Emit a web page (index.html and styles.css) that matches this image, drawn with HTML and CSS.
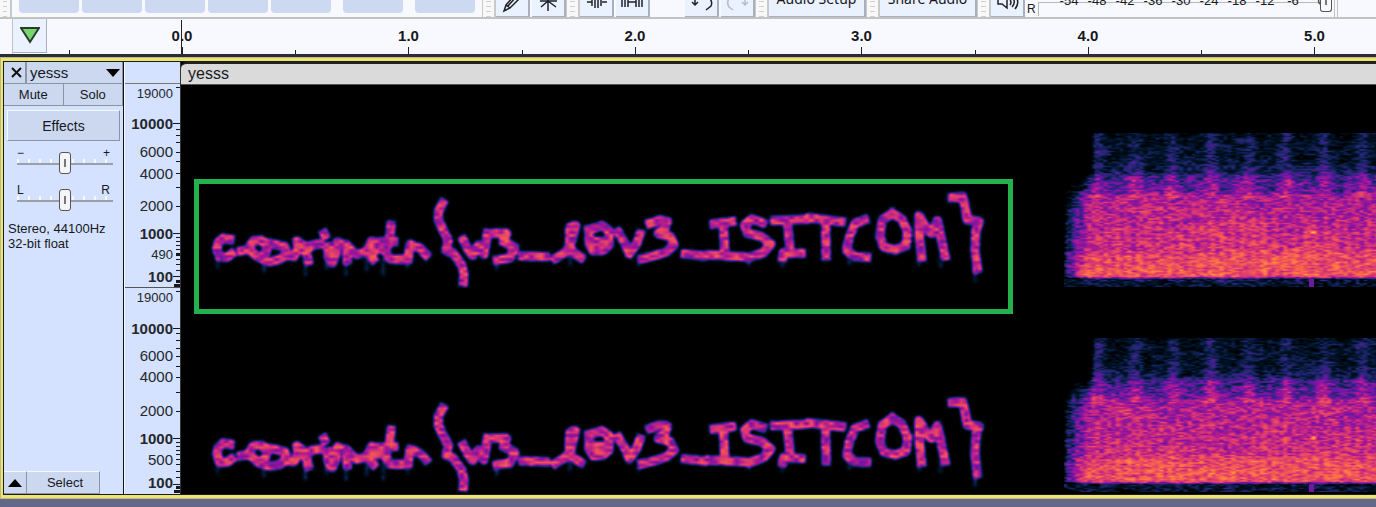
FILE: index.html
```html
<!DOCTYPE html>
<html lang="en">
<head>
<meta charset="utf-8">
<meta name="viewport" content="width=device-width, initial-scale=1">
<title>yesss</title>
<link rel="stylesheet" href="styles.css">
</head>
<body>
<header class="toolbar">
  <div class="grip grip-first"></div>
  <div class="transport">
    <button class="key" aria-label="Pause"></button>
    <button class="key" aria-label="Play"></button>
    <button class="key" aria-label="Stop"></button>
    <button class="key" aria-label="Skip to start"></button>
    <button class="key" aria-label="Skip to end"></button>
    <button class="key key-apart" aria-label="Record"></button>
    <button class="key key-apart" aria-label="Loop"></button>
  </div>
  <div class="grip"></div>
  <div class="tools">
    <button class="tool" aria-label="Draw"><svg width="32" height="17" viewBox="0 0 32 17"><path d="M8 11 10 5 18-4 22 0 14 8ZM10 5 14 8M12 6 20-3" /></svg></button>
    <button class="tool" aria-label="Multi-tool"><svg width="32" height="17" viewBox="0 0 32 17"><path d="M16-5V11M8 1H25M16 1 9 7M16 1 24 7" /></svg></button>
  </div>
  <div class="grip"></div>
  <div class="tools tools-edit">
    <button class="tool" aria-label="Trim"><svg width="32" height="17" viewBox="0 0 32 17"><path d="M7 2H12M22 2H27M12-3V6M15-3V8M18-3V8M21-3V6" /></svg></button>
    <button class="tool" aria-label="Silence"><svg width="32" height="17" viewBox="0 0 32 17"><path d="M6-1V7M9-3V7M12-3V7M12 2H20M20-3V7M23-3V7M26-1V7" /></svg></button>
  </div>
  <div class="tools">
    <button class="tool" aria-label="Undo"><svg width="32" height="17" viewBox="0 0 32 17"><path d="M10-3V5M7 2 10 5 13 2M24-3Q28 2 26 6L21 10" /></svg></button>
    <button class="tool tool-off" aria-label="Redo" disabled><svg width="32" height="17" viewBox="0 0 32 17"><path d="M24-3V5M21 2 24 5 27 2M9-3Q5 2 8 7L12 10" /></svg></button>
  </div>
  <div class="grip"></div>
  <button class="tool tool-text">Audio Setup</button>
  <div class="grip"></div>
  <button class="tool tool-text">Share Audio</button>
  <div class="grip"></div>
  <button class="tool" aria-label="Playback meter"><svg width="32" height="17" viewBox="0 0 32 17"><path d="M7-2V4H11L16 8V-3M19 0Q21 2 19 5M22-2Q25 3 21 7M25-3Q29 3 24 9" /></svg></button>
  <div class="meter">
    <span class="meter-side">R</span>
    <div class="meter-scale">
      <span>-54</span><span>-48</span><span>-42</span><span>-36</span><span>-30</span><span>-24</span><span>-18</span><span>-12</span><span>-6</span><span>0</span>
    </div>
    <button class="meter-thumb" aria-label="Playback level"></button>
  </div>
</header>

<div class="timeline">
  <div class="timeline-grip"></div>
  <button class="pin" aria-label="Pinned play head"><svg width="20" height="17" viewBox="0 0 20 17"><path d="M1 1H19L10 15Z" /></svg></button>
  <div class="ruler">
    <div class="second second-now">0.0</div>
    <div class="second">1.0</div>
    <div class="second">2.0</div>
    <div class="second">3.0</div>
    <div class="second">4.0</div>
    <div class="second">5.0</div>
  </div>
</div>

<main class="track">
  <div class="track-focus">
    <div class="track-body">
      <section class="panel">
        <div class="panel-title">
          <button class="close" aria-label="Close track"><svg width="11" height="11" viewBox="0 0 11 11"><path d="M1 1 10 10M10 1 1 10" /></svg></button>
          <button class="name">yesss<svg width="14" height="8" viewBox="0 0 14 8"><path d="M0 0H14L7 8Z" /></svg></button>
        </div>
        <div class="panel-row">
          <button>Mute</button>
          <button>Solo</button>
        </div>
        <button class="effects">Effects</button>
        <label class="slider"><span>−</span><span>+</span><input type="range" min="-36" max="36" value="0" aria-label="Gain"></label>
        <label class="slider"><span>L</span><span>R</span><input type="range" min="-100" max="100" value="0" aria-label="Pan"></label>
        <p class="info">Stereo, 44100Hz<br>32-bit float</p>
        <div class="panel-foot">
          <button class="fold" aria-label="Collapse"><svg width="14" height="8" viewBox="0 0 14 8"><path d="M0 8H14L7 0Z" /></svg></button>
          <button class="select">Select</button>
        </div>
      </section>

      <section class="scales">
        <div class="scale-head"></div>
        <svg class="scale" width="55" height="203" viewBox="0 0 55 203">
          <path d="M51 3H55M48 39H55M51 45H55M51 51H55M51 58H55M51 68H55M51 77H55M51 89H55M51 103H55M51 122H55M48 149H55M51 153H55M51 157H55M51 161H55M51 165H55M51 175H55M51 180H55M51 186H55M48 192H55" />
          <path class="thick" d="M51 170H55M51 197H55M49 201H55" />
          <g class="minor"><text x="48" y="14">19000</text><text x="48" y="175">490</text></g>
          <g><text x="48" y="73">6000</text><text x="48" y="95">4000</text><text x="48" y="127">2000</text></g>
          <g class="major"><text x="48" y="45">10000</text><text x="48" y="155">1000</text><text x="48" y="198">100</text></g>
        </svg>
        <svg class="scale" width="55" height="205" viewBox="0 0 55 205">
          <path d="M51 3H55M48 40H55M51 45H55M51 52H55M51 60H55M51 68H55M51 78H55M51 89H55M51 104H55M51 123H55M48 150H55M51 154H55M51 158H55M51 162H55M51 166H55M51 171H55M51 176H55M51 183H55M51 189H55M48 196H55" />
          <path class="thick" d="M51 199H55M49 203H55" />
          <g class="minor"><text x="48" y="14">19000</text></g>
          <g><text x="48" y="73">6000</text><text x="48" y="94">4000</text><text x="48" y="128">2000</text><text x="48" y="177">500</text></g>
          <g class="major"><text x="48" y="46">10000</text><text x="48" y="156">1000</text><text x="48" y="200">100</text></g>
        </svg>
      </section>

      <section class="clip">
        <div class="clip-name">yesss</div>
        <canvas class="channel" height="203" data-seed="11" data-shift="0"></canvas>
        <canvas class="channel" height="206" data-seed="47" data-shift="2"></canvas>
        <div class="region"></div>
      </section>
    </div>
  </div>
</main>
<script src="spectrogram.js"></script>
</body>
</html>
```
FILE: styles.css
```css
* {
  box-sizing: border-box;
}

body {
  margin: 0;
  background: #646887;
  color: #16181d;
  font: 13px "Liberation Sans", Arial, sans-serif;
  overflow-x: hidden;
}

button {
  margin: 0;
  padding: 0;
  border: 0;
  color: inherit;
  font: inherit;
}

svg {
  display: block;
}

/* Toolbar */

.toolbar {
  display: flex;
  height: 19px;
  overflow: hidden;
  background: #f8f9ff;
  border-bottom: 2px solid #c2c2c2;
}

.toolbar > * {
  flex: none;
}

.grip {
  width: 14px;
  height: 17px;
  border: solid #c9c9c9;
  border-width: 0 2px 0 1px;
  background: repeating-linear-gradient(#f8f8f8 0 1px, #cfcfcf 1px 2px, #f8f8f8 2px 5px) content-box, #f8f8f8;
  padding: 0 3px;
}

.grip-first {
  width: 12px;
  padding: 0 3px;
  border-left: 0;
}

.transport {
  display: flex;
  gap: 3px;
  padding: 0 7px;
}

.key {
  width: 60px;
  height: 13px;
  background: #ccd9f0;
  border-radius: 0 0 4px 4px;
}

.key-apart {
  margin-left: 9px;
}

.tools {
  display: flex;
  gap: 2px;
}

.tools-edit {
  padding-right: 35px;
}

.tool {
  width: 34px;
  height: 17px;
  background: #eaf1ff;
  border: solid #a9afbd;
  border-width: 0 2px 1px 0;
}

.tool svg {
  fill: none;
  stroke: #202228;
  stroke-width: 1.5;
}

.tool-off svg {
  stroke: #b7bbc5;
}

.tool-text {
  width: 97px;
  height: 34px;
  margin-top: -17px;
  padding-bottom: 2px;
  font: 14px "Noto Sans", sans-serif;
  white-space: nowrap;
}

.meter {
  display: flex;
  width: 313px;
  height: 17px;
  padding-left: 2px;
  border-right: 4px double #c2c2c2;
}

.meter-side {
  width: 11px;
  font-size: 12px;
  line-height: 18px;
}

.meter-scale {
  display: grid;
  grid-template-columns: repeat(10, 28px);
  height: 14px;
  margin-top: 2px;
  padding-left: 16px;
  width: 282px;
  border: solid #b9b9b9;
  border-width: 1px 0 0 1px;
  text-align: center;
  line-height: 1px;
}

.meter-scale span {
  margin-top: -3px;
}

.meter-thumb {
  width: 12px;
  height: 12px;
  background: linear-gradient(#777, #777) center top / 2px 5px no-repeat #f8f9fb;
  border: 1px solid #555;
  border-top: 0;
  border-radius: 0 0 3px 3px;
}

/* Time ruler */

.timeline {
  display: flex;
  height: 38px;
  background: #f8f9ff;
  border-bottom: 3px solid #2b2e36;
}

.timeline-grip {
  flex: none;
  width: 13px;
  border-right: 1px solid #c2c2c2;
}

.pin {
  flex: none;
  width: 34px;
  height: 34px;
  padding: 0 7px;
  background: #eaf1ff;
  border: solid #a9afbd;
  border-width: 0 1px 1px 0;
}

.pin svg {
  fill: #78d66f;
  stroke: #2b3a2b;
  stroke-width: 2;
}

.ruler {
  flex: 1;
  display: grid;
  grid-template-columns: repeat(3, 226px 227px);
  margin-left: 22px;
  overflow: hidden;
}

.second {
  position: relative;
  font-size: 15px;
  font-weight: bold;
  line-height: 34px;
  text-align: center;
  background:
    linear-gradient(#222, #222) left bottom / 1px 4px no-repeat,
    linear-gradient(#222, #222) center bottom / 1px 7px no-repeat;
}

.second-now::after {
  content: "";
  position: absolute;
  top: 1px;
  bottom: 0;
  left: 50%;
  margin-left: -1px;
  width: 1px;
  background: #222;
}

/* Track frame */

.track {
  border: solid #bdb98c;
  border-width: 1px 0 1px 1px;
}

.track-focus {
  border: solid #ebe572;
  border-width: 3px 0 3px 2px;
}

.track-body {
  display: grid;
  grid-template-columns: 120px 57px 1fr;
  border: solid #1d1d1d;
  border-width: 1px 0 1px 1px;
}

/* Control panel */

.panel {
  display: flex;
  flex-direction: column;
  background: #d4e2ff;
  border-right: 1px solid #111;
}

.panel button {
  background: #cbd8f0;
  border: solid #8d95a5;
  border-width: 0 1px 1px 0;
}

.panel-title {
  display: flex;
  height: 22px;
}

.panel .close {
  width: 23px;
  padding-left: 7px;
  border-right-width: 2px;
}

.close path {
  stroke: #111;
  stroke-width: 2;
}

.panel .name {
  flex: 1;
  display: flex;
  align-items: center;
  justify-content: space-between;
  padding: 0 2px 0 3px;
  font-size: 15px;
}

.panel-row {
  display: grid;
  grid-template-columns: 1fr 1fr;
  height: 22px;
}

.panel .effects {
  height: 31px;
  margin: 4px 3px 5px;
  border: solid;
  border-width: 1px;
  border-color: #f4f8ff #8d95a5 #8d95a5 #f4f8ff;
  font-size: 14px;
}

.slider {
  display: grid;
  grid-template: 28px / 1fr 1fr;
  margin: 0 10px 9px 13px;
}

.slider span {
  grid-area: 1 / 1;
  font-size: 12px;
  line-height: 14px;
}

.slider span + span {
  grid-area: 1 / 2;
  justify-self: end;
  padding-right: 3px;
}

.slider input {
  grid-area: 1 / 1 / 2 / 3;
  align-self: end;
  appearance: none;
  width: 100%;
  height: 22px;
  margin: 0;
  background:
    linear-gradient(#9b9fa8, #9b9fa8) 0 11px / 100% 2px no-repeat,
    repeating-linear-gradient(90deg, #f8f8f8 0 2px, transparent 2px 11px) 0 7px / 100% 4px no-repeat;
}

.slider input::-webkit-slider-thumb {
  appearance: none;
  width: 12px;
  height: 22px;
  background: linear-gradient(#777, #777) center / 2px 8px no-repeat #f4f5f7;
  border: 1px solid #555;
  border-radius: 3px;
}

.info {
  margin: 1px 4px;
  font-size: 13px;
  line-height: 15px;
  white-space: nowrap;
}

.panel-foot {
  display: flex;
  height: 23px;
  margin-top: auto;
}

.panel .fold {
  width: 23px;
  padding: 0 4px;
  border-top: 1px solid #f4f8ff;
}

.panel .select {
  width: 73px;
  padding-left: 4px;
  border-top: 1px solid #f4f8ff;
}

/* Frequency scales */

.scales {
  background: #d4e2ff;
  border: solid #f4f8ff;
  border-width: 0 0 0 1px;
  border-right: 1px solid #333;
}

.scale-head {
  height: 22px;
  border-bottom: 1px solid #777;
}

.scale + .scale {
  box-sizing: content-box;
  border-top: 1px solid #555;
}

.scale text {
  font-size: 15px;
  text-anchor: end;
  fill: #25272c;
}

.scale .minor text {
  font-size: 13px;
}

.scale .major text {
  font-weight: bold;
}

.scale path {
  stroke: #16181d;
  shape-rendering: crispEdges;
}

.scale .thick {
  stroke-width: 3;
}

/* Clip */

.clip {
  position: relative;
  min-width: 0;
  background: #000;
}

.clip-name {
  height: 23px;
  padding-left: 7px;
  background: #dadada;
  border-top: 2px solid #222;
  border-bottom: 1px solid #555;
  border-top-left-radius: 6px;
  font-size: 16px;
  line-height: 19px;
}

.channel {
  display: block;
  width: 100%;
}

.region {
  position: absolute;
  left: 13px;
  top: 117px;
  width: 819px;
  height: 135px;
  border: 5px solid #22b14c;
}
```
FILE: spectrogram.js
```js
// Strokes of the drawn signal, three units to the pixel; x is the group's left edge.
const GROUPS = [
  { x: 9, strokes: [
    [120,208, 100,204, 85,217, 80,238, 90,262, 110,262, 124,252],
    [155,242, 175,238, 190,212, 215,210, 232,225, 228,248, 212,260],
    [225,218, 260,224, 285,230, 290,254, 268,268, 238,275, 205,262, 178,240],
    [290,256, 312,260, 325,235, 320,212, 345,230, 355,272],
    [348,245, 365,225, 390,222],
    [402,191, 404,195],
    [412,230, 415,260, 427,278, 438,250, 442,216, 470,226, 472,270],
    [470,226, 490,245],
    [505,252, 530,245, 545,214, 570,218],
    [530,245, 550,268],
    [550,245, 575,232],
    [603,166, 598,210, 586,245, 600,267, 630,268],
    [575,216, 612,215],
    [655,266, 660,222, 690,235, 708,254],
    [758,100, 745,125, 745,150, 762,186, 775,210, 768,240, 790,250, 815,285, 822,315, 820,336]
  ] },
  { x: 279, strokes: [
    [10,210, 25,240, 38,256, 55,225, 72,254, 82,190],
    [107,190, 140,190, 130,215, 165,232, 150,264, 112,270],
    [188,258, 256,260],
    [286,265, 320,245, 335,215, 347,167, 330,172, 328,215, 335,245, 362,262],
    [387,180, 425,167, 447,182, 447,225, 430,241, 400,243, 387,220, 387,180],
    [400,212, 420,214],
    [475,187, 495,220, 508,252, 530,220, 540,192],
    [570,160, 600,150, 622,154, 615,175, 595,190, 630,200, 643,225, 620,245, 580,258, 547,266],
    [676,252, 730,258],
    [762,162, 815,155], [790,160, 795,250], [750,255, 846,260]
  ] },
  { x: 549, strokes: [
    [98,158, 65,147, 44,165, 52,190, 95,200, 123,222, 100,248, 60,262],
    [134,152, 225,148], [172,155, 180,235], [158,262, 160,248, 213,250],
    [240,144, 335,155], [287,155, 288,258],
    [404,150, 375,160, 358,200, 350,241, 375,260, 410,262],
    [487,130, 457,150, 449,200, 462,231, 495,240, 528,228, 533,185, 515,147, 487,130],
    [575,262, 568,200, 567,137, 590,175, 605,190, 622,152, 635,210, 645,258],
    [667,83, 698,80, 705,110, 712,150, 748,154, 738,180, 735,240, 742,296]
  ] }
];

// Faint echoes hanging below the strokes: x, top, bottom in the first group's units.
const DRIPS = [[83,262,290], [222,280,302], [346,270,312], [410,265,295], [468,270,312],
  [530,270,300], [580,270,312], [652,265,290], [920,270,298], [1140,255,285],
  [1345,265,285], [1677,258,282], [1777,258,288], [1978,260,280], [2187,255,285],
  [2252,262,288], [2355,300,332]];

const COLOURS = [
  [0, 0, 0, 0], [0.14, 0, 20, 42], [0.27, 32, 38, 112], [0.4, 104, 22, 165],
  [0.53, 168, 24, 148], [0.67, 218, 56, 112], [0.8, 244, 92, 82],
  [0.92, 255, 130, 66], [1, 255, 185, 75]
];

const NOISE_START = 885;

function colourOf(v) {
  v = Math.max(0, Math.min(1, v));
  for (let i = 1; i < COLOURS.length; i++) {
    const a = COLOURS[i - 1], b = COLOURS[i];
    if (v <= b[0]) {
      const t = (v - a[0]) / (b[0] - a[0]);
      return [1, 2, 3].map(k => a[k] + (b[k] - a[k]) * t);
    }
  }
  return [255, 185, 75];
}

function hash(x, y, seed) {
  let n = Math.imul(x, 374761393) + Math.imul(y, 668265263) + Math.imul(seed, 1274126177);
  n = Math.imul(n ^ (n >>> 13), 1274126177);
  return ((n ^ (n >>> 16)) >>> 0) / 4294967296;
}

function noise(x, y, seed) {
  const ix = Math.floor(x), iy = Math.floor(y), fx = x - ix, fy = y - iy;
  const top = hash(ix, iy, seed) * (1 - fx) + hash(ix + 1, iy, seed) * fx;
  const low = hash(ix, iy + 1, seed) * (1 - fx) + hash(ix + 1, iy + 1, seed) * fx;
  return top * (1 - fy) + low * fy - 0.5;
}

function ramp(points, v) {
  if (v <= points[0][0]) return points[0][1];
  for (let i = 1; i < points.length; i++) {
    const a = points[i - 1], b = points[i];
    if (v <= b[0]) return a[1] + (b[1] - a[1]) * (v - a[0]) / (b[0] - a[0]);
  }
  return points[points.length - 1][1];
}

const LEVELS = [[48, 0.12], [75, 0.16], [86, 0.22], [91, 0.35], [106, 0.42], [110, 0.54],
  [140, 0.59], [162, 0.64], [170, 0.72], [189, 0.77], [191, 0.7], [194, 0.15], [202, 0.12]];

function noiseLevel(x, y, seed) {
  const t = x - NOISE_START;
  if (t < -2 || y < 48 || y > 201) return 0;
  let v = ramp(LEVELS, y);
  const beat = Math.pow(0.5 + 0.5 * Math.cos((t - 31) * 2 * Math.PI / 37.8), 3);
  if (y < 113) v += beat * (y < 91 ? 0.13 : 0.16) - 0.03;
  if (y > 130 && y < 191) v += 0.03 * Math.cos(t * 2 * Math.PI / 10.4);
  const depth = y < 91 ? 0.24 : 0.32;
  v += noise(x / 4, y / 1.5, seed) * depth + noise(x / 9, y / 3, seed + 5) * 0.12;
  v += noise(x / 20, y / 12, seed + 9) * 0.08;
  const edge = y < 91 ? 21 : y < 106 ? 6 - (y - 91) / 2 : -2;
  v -= y < 91
    ? ramp([[edge - 7, 0.7], [edge + 8, 0]], t)
    : y > 193 ? 0 : ramp([[edge - 3, 0.8], [edge + 3, 0.42], [edge + 12, 0.24], [edge + 28, 0]], t);
  if (y > 193 && Math.abs(t - 245) < 3) v = 0.42;
  const spot = Math.hypot((t - 247) / 5, (y - 147) / 3);
  return spot < 1 ? v + (1 - spot) * 0.5 : v;
}

function drawChannel(canvas) {
  const width = canvas.width = canvas.clientWidth;
  const height = canvas.height;
  const seed = Number(canvas.dataset.seed);
  const shift = Number(canvas.dataset.shift);

  const mask = document.createElement("canvas");
  mask.width = width;
  mask.height = height;
  const pen = mask.getContext("2d");
  pen.filter = "blur(1.8px)";
  pen.strokeStyle = "#fff";
  pen.lineWidth = 9;
  pen.lineCap = "square";
  pen.lineJoin = "round";
  pen.beginPath();
  for (const group of GROUPS) {
    for (const s of group.strokes) {
      for (let i = 0; i < s.length; i += 2) {
        const x = group.x + s[i] / 3, y = 85 + shift + s[i + 1] / 3;
        i ? pen.lineTo(x, y) : pen.moveTo(x, y);
      }
    }
  }
  pen.stroke();

  pen.strokeStyle = "rgba(255, 255, 255, 0.3)";
  pen.lineWidth = 4;
  pen.lineCap = "round";
  pen.beginPath();
  for (const [x, top, bottom] of DRIPS) {
    pen.moveTo(9 + x / 3, 85 + shift + top / 3);
    pen.lineTo(9 + x / 3, 85 + shift + bottom / 3);
  }
  pen.stroke();

  const signal = pen.getImageData(0, 0, width, height).data;
  const view = canvas.getContext("2d");
  const image = view.createImageData(width, height);
  for (let y = 0; y < height; y++) {
    for (let x = 0; x < width; x++) {
      const at = (y * width + x) * 4;
      const m = Math.min(1.15, signal[at + 3] / 255 * 1.3);
      let v = 0;
      if (m > 0.01) v = m * (0.52 + noise(x / 5, y / 3, seed) * 0.36);
      else if (x > NOISE_START - 8) v = noiseLevel(x, y - shift, seed);
      const c = colourOf(v);
      image.data[at] = c[0];
      image.data[at + 1] = c[1];
      image.data[at + 2] = c[2];
      image.data[at + 3] = 255;
    }
  }
  view.putImageData(image, 0, 0);
}

function drawAll() {
  document.querySelectorAll(".channel").forEach(drawChannel);
}

window.addEventListener("resize", drawAll);
drawAll();
```
